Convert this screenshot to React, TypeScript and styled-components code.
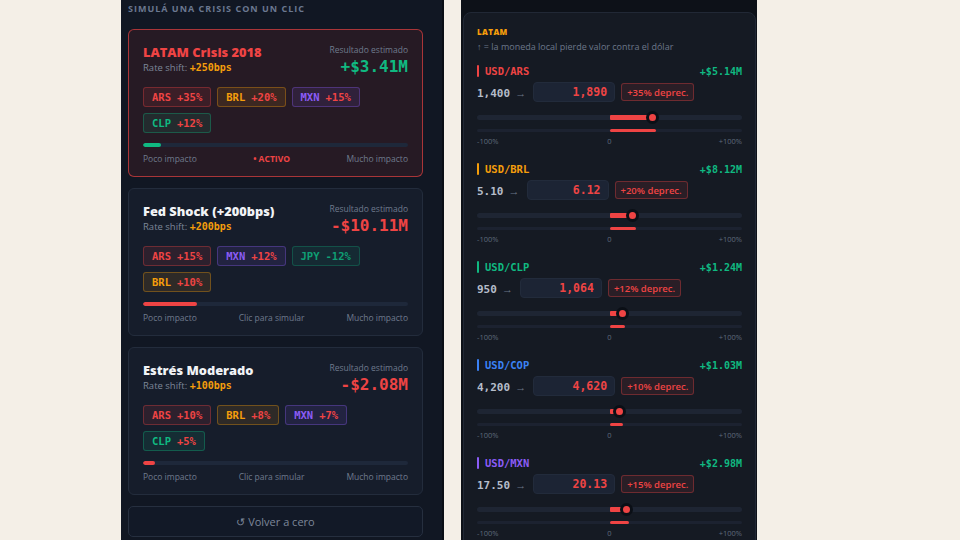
import React from "react";
import styled, { createGlobalStyle } from "styled-components";

const C = {
  red: "#ef4444",
  orange: "#f59e0b",
  green: "#10b981",
  purple: "#8b5cf6",
  blue: "#3b82f6",
};

const MONO = `"DejaVu Sans Mono", "Liberation Mono", monospace`;
const SANS = `"Open Sans", "Noto Sans", sans-serif`;

const GlobalStyle = createGlobalStyle`
  html, body {
    margin: 0;
    padding: 0;
    background: #f4efe7;
    font-family: ${SANS};
    overflow: hidden;
  }
  * { box-sizing: border-box; }
`;

const Page = styled.div`
  display: flex;
  gap: 17px;
  padding-left: 121px;
  height: 540px;
  overflow: hidden;
`;

const LeftPanel = styled.div`
  width: 323px;
  height: 540px;
  background: #111723;
  border-right: 2px solid #0a0e15;
  padding: 3px 19px 0 7px;
  display: flex;
  flex-direction: column;
  gap: 11px;
`;

const SectionTitle = styled.div`
  font-size: 9px;
  font-weight: 700;
  letter-spacing: 1px;
  color: #6b7890;
  height: 14px;
  line-height: 12px;
  margin-bottom: 1px;
`;

const Card = styled.div<{ $active?: boolean }>`
  flex-shrink: 0;
  height: 148px;
  border-radius: 6px;
  padding: 13px 14px 0 14px;
  background: ${p => (p.$active ? "#261a24" : "#161d2b")};
  border: 1px solid ${p => (p.$active ? "rgba(239,68,68,0.65)" : "#232c3c")};
  display: flex;
  flex-direction: column;
`;

const CardHead = styled.div`
  display: flex;
  justify-content: space-between;
  align-items: flex-start;
  height: 44px;
`;

const TitleBox = styled.div`
  padding-top: 1px;
`;

const CardTitle = styled.div<{ $active?: boolean }>`
  font-size: 12.8px;
  font-weight: 800;
  color: ${p => (p.$active ? C.red : "#f1f3f6")};
  line-height: 17px;
`;

const RateShift = styled.div`
  font-size: 9.5px;
  color: #7d8799;
  line-height: 14px;
  span {
    font-family: ${MONO};
    font-size: 10px;
    font-weight: 700;
    color: ${C.orange};
  }
`;

const ResultBox = styled.div`
  text-align: right;
`;

const ResultLabel = styled.div`
  font-size: 8.5px;
  color: #6f7a8d;
  line-height: 13px;
`;

const ResultValue = styled.div<{ $positive?: boolean }>`
  font-family: ${MONO};
  font-size: 16px;
  font-weight: 700;
  line-height: 22px;
  color: ${p => (p.$positive ? C.green : C.red)};
`;

const Tags = styled.div`
  display: flex;
  flex-wrap: wrap;
  gap: 6px 6px;
  width: 230px;
  height: 46px;
`;

const Tag = styled.div<{ $color: string }>`
  height: 20px;
  padding: 0 8px;
  display: flex;
  align-items: center;
  gap: 6px;
  border-radius: 3px;
  font-family: ${MONO};
  font-size: 10.5px;
  font-weight: 700;
  color: ${p => p.$color};
  border: 1px solid ${p => p.$color}55;
  background: ${p => p.$color}1c;
`;

const TagPct = styled.span<{ $color: string }>`
  color: ${p => p.$color};
`;

const Progress = styled.div`
  margin-top: 10px;
  height: 4px;
  border-radius: 2px;
  background: #1e283a;
  overflow: hidden;
`;

const ProgressFill = styled.div<{ $color: string }>`
  height: 100%;
  border-radius: 2px;
  background: ${p => p.$color};
`;

const ProgressLabels = styled.div`
  display: flex;
  justify-content: space-between;
  margin-top: 6px;
  font-size: 8.5px;
  color: #6f7a8d;
  line-height: 12px;
`;

const Active = styled.span`
  color: ${C.red};
  font-weight: 700;
`;

const ResetButton = styled.div`
  flex-shrink: 0;
  height: 31px;
  border: 1px solid #262f3f;
  border-radius: 5px;
  background: #121927;
  display: flex;
  align-items: center;
  justify-content: center;
  font-size: 11px;
  color: #7d8799;
`;

const RightPanel = styled.div`
  width: 296px;
  height: 540px;
  background: #0d1118;
  padding: 12px 1px 0 2px;
`;

const RegionCard = styled.div`
  height: 600px;
  background: #151a23;
  border: 1px solid #212835;
  border-radius: 8px;
  padding: 13px 13px 0 13px;
`;

const RegionName = styled.div`
  font-size: 8px;
  font-weight: 800;
  letter-spacing: 0.4px;
  color: ${C.orange};
  line-height: 12px;
`;

const RegionNote = styled.div`
  font-size: 9px;
  color: #6c778a;
  line-height: 13px;
  margin-top: 2px;
`;

const Pairs = styled.div`
  margin-top: 11px;
  display: flex;
  flex-direction: column;
`;

const Pair = styled.div`
  height: 98px;
`;

const PairHead = styled.div`
  display: flex;
  justify-content: space-between;
  align-items: center;
  height: 14px;
`;

const PairName = styled.div<{ $color: string }>`
  display: flex;
  align-items: center;
  gap: 6px;
  font-family: ${MONO};
  font-size: 10.5px;
  font-weight: 700;
  color: ${p => p.$color};
  &::before {
    content: "";
    width: 2px;
    height: 12px;
    border-radius: 1px;
    background: ${p => p.$color};
  }
`;

const Pnl = styled.div`
  font-family: ${MONO};
  font-size: 10px;
  font-weight: 700;
  color: ${C.green};
`;

const RateRow = styled.div`
  display: flex;
  align-items: center;
  margin-top: 3px;
  height: 22px;
`;

const Base = styled.div`
  font-family: ${MONO};
  font-size: 11px;
  font-weight: 700;
  color: #b5bdca;
  span {
    color: #6c778a;
    font-family: ${SANS};
    font-weight: 400;
    margin-left: 5px;
  }
`;

const RateInput = styled.div`
  margin-left: 7px;
  width: 82px;
  height: 20px;
  border-radius: 4px;
  background: #1c2434;
  border: 1px solid #222b3b;
  display: flex;
  align-items: center;
  justify-content: flex-end;
  padding-right: 7px;
  font-family: ${MONO};
  font-size: 11.5px;
  font-weight: 700;
  color: ${C.red};
`;

const Deprec = styled.div`
  margin-left: 6px;
  height: 18px;
  padding: 0 5px;
  border-radius: 3px;
  border: 1px solid rgba(239, 68, 68, 0.35);
  background: rgba(239, 68, 68, 0.1);
  color: ${C.red};
  font-size: 9.5px;
  font-weight: 600;
  display: flex;
  align-items: center;
`;

const Slider = styled.div`
  position: relative;
  margin-top: 12px;
  height: 5px;
  border-radius: 3px;
  background: #1e2533;
`;

const SliderFill = styled.div`
  position: absolute;
  left: 50%;
  top: 0;
  height: 5px;
  background: ${C.red};
  border-radius: 1px;
`;

const Thumb = styled.div`
  position: absolute;
  top: -4px;
  width: 13px;
  height: 13px;
  margin-left: -7px;
  border-radius: 50%;
  background: ${C.red};
  border: 3px solid #0b0f16;
`;

const ImpactBar = styled.div`
  position: relative;
  margin-top: 9px;
  height: 3px;
  border-radius: 2px;
  background: #1c2230;
`;

const ImpactFill = styled.div`
  position: absolute;
  left: 50%;
  top: 0;
  height: 3px;
  border-radius: 2px;
  background: ${C.red};
`;

const Scale = styled.div`
  display: grid;
  grid-template-columns: 1fr auto 1fr;
  margin-top: 4px;
  font-size: 7.5px;
  color: #5f6a7c;
  line-height: 10px;
  span:last-child {
    text-align: right;
  }
`;

interface ITag {
  code: string;
  color: string;
  pct: string;
  pctColor?: string;
}

interface IScenario {
  title: string;
  shift: string;
  result: string;
  positive?: boolean;
  active?: boolean;
  tags: ITag[];
  fill: number;
}

const scenarios: IScenario[] = [
  {
    title: "LATAM Crisis 2018",
    shift: "+250bps",
    result: "+$3.41M",
    positive: true,
    active: true,
    fill: 18,
    tags: [
      { code: "ARS", color: C.red, pct: "+35%" },
      { code: "BRL", color: C.orange, pct: "+20%" },
      { code: "MXN", color: C.purple, pct: "+15%" },
      { code: "CLP", color: C.green, pct: "+12%" },
    ],
  },
  {
    title: "Fed Shock (+200bps)",
    shift: "+200bps",
    result: "-$10.11M",
    fill: 54,
    tags: [
      { code: "ARS", color: C.red, pct: "+15%" },
      { code: "MXN", color: C.purple, pct: "+12%" },
      { code: "JPY", color: "#0f9f74", pct: "-12%", pctColor: "#0f9f74" },
      { code: "BRL", color: C.orange, pct: "+10%" },
    ],
  },
  {
    title: "Estrés Moderado",
    shift: "+100bps",
    result: "-$2.08M",
    fill: 12,
    tags: [
      { code: "ARS", color: C.red, pct: "+10%" },
      { code: "BRL", color: C.orange, pct: "+8%" },
      { code: "MXN", color: C.purple, pct: "+7%" },
      { code: "CLP", color: C.green, pct: "+5%" },
    ],
  },
];

const pairs = [
  { name: "USD/ARS", color: C.red, base: "1,400", value: "1,890", pct: 35, pnl: "+$5.14M" },
  { name: "USD/BRL", color: C.orange, base: "5.10", value: "6.12", pct: 20, pnl: "+$8.12M" },
  { name: "USD/CLP", color: C.green, base: "950", value: "1,064", pct: 12, pnl: "+$1.24M" },
  { name: "USD/COP", color: C.blue, base: "4,200", value: "4,620", pct: 10, pnl: "+$1.03M" },
  { name: "USD/MXN", color: C.purple, base: "17.50", value: "20.13", pct: 15, pnl: "+$2.98M" },
];

const ScenarioCard = ({ s }: { s: IScenario }) => (
  <Card $active={s.active}>
    <CardHead>
      <TitleBox>
        <CardTitle $active={s.active}>{s.title}</CardTitle>
        <RateShift>
          Rate shift: <span>{s.shift}</span>
        </RateShift>
      </TitleBox>
      <ResultBox>
        <ResultLabel>Resultado estimado</ResultLabel>
        <ResultValue $positive={s.positive}>{s.result}</ResultValue>
      </ResultBox>
    </CardHead>
    <Tags>
      {s.tags.map(t => (
        <Tag key={t.code} $color={t.color}>
          {t.code}
          <TagPct $color={t.pctColor || C.red}>{t.pct}</TagPct>
        </Tag>
      ))}
    </Tags>
    <Progress>
      <ProgressFill
        $color={s.active ? C.green : C.red}
        style={{ width: `${s.fill}px` }}
      />
    </Progress>
    <ProgressLabels>
      <span>Poco impacto</span>
      {s.active ? <Active>• ACTIVO</Active> : <span>Clic para simular</span>}
      <span>Mucho impacto</span>
    </ProgressLabels>
  </Card>
);

const App = () => {
  return (
    <>
      <GlobalStyle />
      <Page>
        <LeftPanel>
          <SectionTitle>SIMULÁ UNA CRISIS CON UN CLIC</SectionTitle>
          {scenarios.map(s => (
            <ScenarioCard key={s.title} s={s} />
          ))}
          <ResetButton>↺ Volver a cero</ResetButton>
        </LeftPanel>
        <RightPanel>
          <RegionCard>
            <RegionName>LATAM</RegionName>
            <RegionNote>↑ = la moneda local pierde valor contra el dólar</RegionNote>
            <Pairs>
              {pairs.map(p => (
                <Pair key={p.name}>
                  <PairHead>
                    <PairName $color={p.color}>{p.name}</PairName>
                    <Pnl>{p.pnl}</Pnl>
                  </PairHead>
                  <RateRow>
                    <Base>
                      {p.base}
                      <span>→</span>
                    </Base>
                    <RateInput>{p.value}</RateInput>
                    <Deprec>+{p.pct}% deprec.</Deprec>
                  </RateRow>
                  <Slider>
                    <SliderFill style={{ width: `${p.pct / 2}%` }} />
                    <Thumb style={{ left: `${50 + p.pct / 2 - 1}%` }} />
                  </Slider>
                  <ImpactBar>
                    <ImpactFill style={{ width: `${p.pct / 2}%` }} />
                  </ImpactBar>
                  <Scale>
                    <span>-100%</span>
                    <span>0</span>
                    <span>+100%</span>
                  </Scale>
                </Pair>
              ))}
            </Pairs>
          </RegionCard>
        </RightPanel>
      </Page>
    </>
  );
};

export default App;
